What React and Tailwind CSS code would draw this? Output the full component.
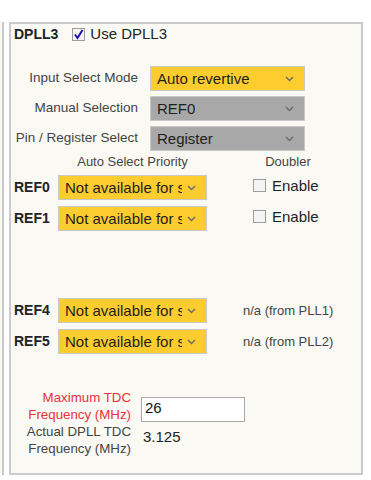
import React from "react";

const font = { fontFamily: '"Liberation Sans", Arial, sans-serif' };

function Chevron() {
  return (
    <svg width="9" height="6" viewBox="0 0 9 6" className="shrink-0">
      <path d="M1 1 L4.5 4.5 L8 1" fill="none" stroke="#6b6b6b" strokeWidth="1.4" />
    </svg>
  );
}

function Select({ text, color, width, clip }) {
  return (
    <div
      className={`flex items-center h-[25px] border border-[#c9c9c9] pl-[6px] pr-[10px] ${color} ${width}`}
    >
      <span
        className={`text-[15px] leading-[17px] text-[#1e1e1e] whitespace-nowrap overflow-hidden ${clip}`}
      >
        {text}
      </span>
      <div className="ml-auto flex items-center">
        <Chevron />
      </div>
    </div>
  );
}

function Check({ checked }) {
  return (
    <div className="w-[13px] h-[13px] border border-[#9c9c9c] bg-[#f4f4f4] flex items-center justify-center shrink-0">
      {checked && (
        <svg width="11" height="11" viewBox="0 0 11 11">
          <path d="M2 5.5 L4.5 9 L9.5 1" fill="none" stroke="#1b17a8" strokeWidth="2" />
        </svg>
      )}
    </div>
  );
}

function TopRow({ label, text, color }) {
  return (
    <div className="flex items-center h-[25px]">
      <div className="w-[127px] text-right text-[13.5px] text-[#444]">{label}</div>
      <div className="ml-[12px]">
        <Select text={text} color={color} width="w-[155px]" clip="" />
      </div>
    </div>
  );
}

function RefRow({ name, right }) {
  return (
    <div className="flex items-center h-[25px]">
      <div className="w-[47px] pl-[3px] text-[14px] font-bold text-[#222]">{name}</div>
      <Select
        text="Not available for selection"
        color="bg-[#fdcc2e]"
        width="w-[149px]"
        clip="w-[117px]"
      />
      {right}
    </div>
  );
}

function Enable() {
  return (
    <div className="ml-[46px] flex items-center self-start mt-[2px] gap-[6px]">
      <Check />
      <span className="text-[15px] leading-[17px] text-[#222]">Enable</span>
    </div>
  );
}

function NA({ text }) {
  return <div className="ml-[36px] text-[13px] text-[#444]">{text}</div>;
}

export default function App() {
  return (
    <div style={font} className="w-[371px] h-[480px] bg-white flex pt-[22px] pb-[5px]">
      <div className="w-[4px] bg-[#faf9f4] border-r-2 border-[#c9c9c9]" />
      <div className="ml-[5px] w-[354px] border-2 border-[#cbcbcb] bg-[#faf9f4] flex flex-col">
        <div className="flex items-center h-[20px] pl-[3px]">
          <span className="text-[14px] font-bold text-[#222]">DPLL3</span>
          <div className="ml-[14px]">
            <Check checked />
          </div>
          <span className="ml-[5px] text-[15px] text-[#222]">Use DPLL3</span>
        </div>

        <div className="mt-[22px] flex flex-col gap-[5px]">
          <TopRow label="Input Select Mode" text="Auto revertive" color="bg-[#fdcc2e]" />
          <TopRow label="Manual Selection" text="REF0" color="bg-[#a8a8a8]" />
          <TopRow label="Pin / Register Select" text="Register" color="bg-[#a8a8a8]" />
        </div>

        <div className="mt-[3px] flex h-[15px] text-[13px] leading-[15px] text-[#444]">
          <div className="ml-[47px] w-[149px] text-center">Auto Select Priority</div>
          <div className="ml-[41px] w-[80px] text-center">Doubler</div>
        </div>

        <div className="mt-[6px] flex flex-col gap-[6px]">
          <RefRow name="REF0" right={<Enable />} />
          <RefRow name="REF1" right={<Enable />} />
        </div>

        <div className="mt-[67px] flex flex-col gap-[6px]">
          <RefRow name="REF4" right={<NA text="n/a (from PLL1)" />} />
          <RefRow name="REF5" right={<NA text="n/a (from PLL2)" />} />
        </div>

        <div className="mt-[35px] flex items-start">
          <div className="w-[120px] text-right text-[13.3px] leading-[17px] text-[#ec3038]">
            Maximum TDC
            <br />
            Frequency (MHz)
          </div>
          <div className="ml-[10px] mt-[8px] w-[104px] h-[25px] border border-[#a9a9a9] bg-white pl-[3px] text-[15px] leading-[20px] text-[#111]">
            26
          </div>
        </div>
        <div className="flex items-start">
          <div className="w-[120px] text-right text-[13.3px] leading-[17px] text-[#444]">
            Actual DPLL TDC
            <br />
            Frequency (MHz)
          </div>
          <div className="ml-[12px] mt-[5px] text-[15px] leading-[17px] text-[#222]">3.125</div>
        </div>
      </div>
    </div>
  );
}
